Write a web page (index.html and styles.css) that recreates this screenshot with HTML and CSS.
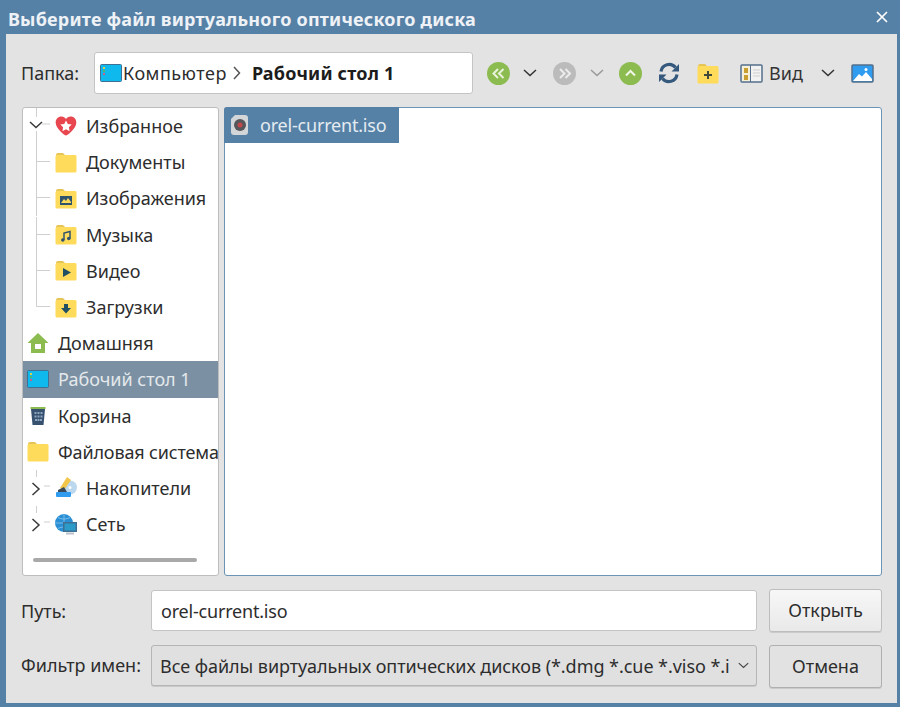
FILE: index.html
```html
<!DOCTYPE html>
<html lang="en">
<head>
    <meta charset="utf-8">
    <title>Выберите файл виртуального оптического диска</title>
    <link rel="stylesheet" href="styles.css">
</head>
<body>
    <svg class="defs" width="0" height="0">
        <symbol id="folder" viewBox="0 0 22 21">
            <path d="M1 4V3a2 2 0 0 1 2-2h5l2 2h4v3H1z" fill="#e6c557"/>
            <rect x="0.5" y="3" width="21" height="17.5" rx="1.5" fill="#ffdb5c"/>
        </symbol>
        <symbol id="desktop" viewBox="0 0 22 18">
            <rect x="0.5" y="0.5" width="21" height="17" rx="1" fill="#0fb9ee" stroke="#3f6f92"/>
            <rect x="3" y="3" width="2" height="2" fill="#d8d34c"/>
            <rect x="3" y="6" width="2" height="2" fill="#56b36b"/>
            <rect x="3" y="9" width="2" height="2" fill="#c45f8f"/>
        </symbol>
        <symbol id="chev-down" viewBox="0 0 14 8">
            <path d="M1 1l6 5.5L13 1" fill="none" stroke="currentColor" stroke-width="1.5"/>
        </symbol>
        <symbol id="chev-right" viewBox="0 0 8 14">
            <path d="M1 1l5.5 6L1 13" fill="none" stroke="currentColor" stroke-width="1.5"/>
        </symbol>
    </svg>

    <div class="window">
        <header class="titlebar">
            <span class="title">Выберите файл виртуального оптического диска</span>
            <svg class="close" width="12" height="12" viewBox="0 0 12 12"><path d="M1 1l10 10M11 1L1 11" stroke="#fff" stroke-width="1.7"/></svg>
        </header>

        <div class="content">
            <div class="toolbar">
                <span class="folder-label">Папка:</span>
                <div class="crumbs">
                    <svg class="crumb-icon" width="22" height="18"><use href="#desktop"/></svg>
                    <span class="crumb-root">Компьютер</span>
                    <svg class="crumb-sep" width="8" height="14"><use href="#chev-right"/></svg>
                    <b>Рабочий стол 1</b>
                </div>
                <div class="tools">
                    <svg class="tool t-back" width="23" height="23" viewBox="0 0 23 23"><circle cx="11.5" cy="11.5" r="11.5" fill="#8cbb4f"/><path d="M11 7l-4.500 4.500L11 16M16.500 7L12 11.500l4.500 4.500" fill="none" stroke="#e9f2dc" stroke-width="2"/></svg>
                    <svg class="tool t-arrow" width="14" height="8"><use href="#chev-down"/></svg>
                    <svg class="tool t-forward" width="23" height="23" viewBox="0 0 23 23"><circle cx="11.500" cy="11.500" r="11.500" fill="#bbbbbb"/><path d="M7 7l4.500 4.500L7 16M12.500 7l4.500 4.500-4.500 4.500" fill="none" stroke="#ececec" stroke-width="2"/></svg>
                    <svg class="tool t-arrow off" width="14" height="8"><use href="#chev-down"/></svg>
                    <svg class="tool t-up" width="23" height="23" viewBox="0 0 23 23"><circle cx="11.500" cy="11.500" r="11.500" fill="#8cbb4f"/><path d="M7 13.500l4.500-4.500 4.500 4.500" fill="none" stroke="#f1f6e8" stroke-width="2"/></svg>
                    <svg class="tool t-reload" width="22" height="22" viewBox="0 0 22 22"><path d="M3 9.500a8.200 8.200 0 0 1 14.500-4M19 12.500a8.200 8.200 0 0 1-14.500 4" fill="none" stroke="#35597c" stroke-width="3.200"/><path d="M21 2v7.500h-7.500zM1 20v-7.500h7.500z" fill="#35597c"/></svg>
                    <svg class="tool t-new" width="22" height="21" viewBox="0 0 22 21"><use href="#folder"/><path d="M11 8v8M7 12h8" stroke="#3f4a3a" stroke-width="2"/></svg>
                    <svg class="tool t-view" width="23" height="19" viewBox="0 0 23 19"><rect x="1" y="1" width="21" height="17" rx="1" fill="#f2f2f2" stroke="#54708c" stroke-width="1.500"/><rect x="2" y="2" width="8" height="15" fill="#f6f0d8"/><path d="M10.500 1v17" stroke="#54708c"/><rect x="4" y="4" width="4" height="5" fill="#c99f2f"/><rect x="4" y="11" width="4" height="5" fill="#c99f2f"/><path d="M13 6h7M13 9h7M13 12h7" stroke="#cfcfcf"/></svg>
                    <span class="view-text">Вид</span>
                    <svg class="tool t-arrow view-arrow" width="14" height="8"><use href="#chev-down"/></svg>
                    <svg class="tool t-preview" width="23" height="19" viewBox="0 0 23 19"><rect x="1" y="1" width="21" height="17" rx="1" fill="#2f9cf0" stroke="#54708c" stroke-width="1.500"/><path d="M2 17l6-7 3 2.500 4-4.500 6 7v2z" fill="#fff"/><circle cx="15" cy="5.500" r="1.500" fill="#fff"/></svg>
                </div>
            </div>

            <div class="main">
                <nav class="side">
                    <div class="side-list">
                        <div class="row">
                            <svg class="guide" width="28" height="36" viewBox="0 0 28 36"><path d="M13.500 0v9M13.500 23v13M19 16h8" stroke="#cfcfcf"/><path d="M7 14l6 5.500 6-5.500" fill="none" stroke="#3a3a3a" stroke-width="1.500"/></svg>
                            <svg class="ico" width="22" height="20" viewBox="0 0 22 20"><path d="M11 19.500C10 19.500 1 13 .7 7 .5 3 3 .5 6.500.5 8.500.5 10 1.500 11 3 12 1.500 13.500.5 15.500.5 19 .5 21.500 3 21.300 7 21 13 12 19.500 11 19.500z" fill="#e8474f"/><path d="M11 4.500l1.800 3.600 3.900.5-2.800 2.700.7 3.900-3.600-1.900-3.600 1.900.7-3.900-2.800-2.700 3.900-.5z" fill="#fff"/></svg>
                            <span>Избранное</span>
                        </div>
                        <div class="row">
                            <svg class="guide" width="28" height="36" viewBox="0 0 28 36"><path d="M13.500 0v36M14 17.500h13" stroke="#cfcfcf"/></svg>
                            <svg class="ico" width="22" height="21"><use href="#folder"/></svg>
                            <span>Документы</span>
                        </div>
                        <div class="row">
                            <svg class="guide" width="28" height="36" viewBox="0 0 28 36"><path d="M13.500 0v36M14 17.500h13" stroke="#cfcfcf"/></svg>
                            <svg class="ico" width="22" height="21" viewBox="0 0 22 21"><use href="#folder"/><rect x="5" y="8" width="12" height="9" fill="#30536e"/><path d="M6 15l3-4 2 2 2-3 3 4v1H6z" fill="#ffdb5c"/></svg>
                            <span>Изображения</span>
                        </div>
                        <div class="row">
                            <svg class="guide" width="28" height="36" viewBox="0 0 28 36"><path d="M13.500 0v36M14 17.500h13" stroke="#cfcfcf"/></svg>
                            <svg class="ico" width="22" height="21" viewBox="0 0 22 21"><use href="#folder"/><path d="M9 16V9l6-1.500V14.500" fill="none" stroke="#30536e" stroke-width="1.500"/><circle cx="7.800" cy="16" r="1.800" fill="#30536e"/><circle cx="13.800" cy="14.500" r="1.800" fill="#30536e"/></svg>
                            <span>Музыка</span>
                        </div>
                        <div class="row">
                            <svg class="guide" width="28" height="36" viewBox="0 0 28 36"><path d="M13.500 0v36M14 17.500h13" stroke="#cfcfcf"/></svg>
                            <svg class="ico" width="22" height="21" viewBox="0 0 22 21"><use href="#folder"/><path d="M8 8l8 4.500-8 4.500z" fill="#1f4f63"/></svg>
                            <span>Видео</span>
                        </div>
                        <div class="row">
                            <svg class="guide" width="28" height="36" viewBox="0 0 28 36"><path d="M13.500 0v17.500H27" fill="none" stroke="#cfcfcf"/></svg>
                            <svg class="ico" width="22" height="21" viewBox="0 0 22 21"><use href="#folder"/><path d="M9 7h4v4h3l-5 5.500L6 11h3z" fill="#1f4f63"/></svg>
                            <span>Загрузки</span>
                        </div>
                        <div class="row top">
                            <svg class="ico" width="22" height="20" viewBox="0 0 22 20"><path d="M11 0L0.500 10H4v10h14V10h3.500z" fill="#8cbb4f"/><rect x="8" y="11" width="6" height="5" fill="#fff"/></svg>
                            <span>Домашняя</span>
                        </div>
                        <div class="row top selected">
                            <svg class="ico" width="22" height="18"><use href="#desktop"/></svg>
                            <span>Рабочий стол 1</span>
                        </div>
                        <div class="row top">
                            <svg class="ico trash" width="16" height="18" viewBox="0 0 16 18"><path d="M1 2h14l-1.500 16h-11z" fill="#36506f"/><rect x="0.500" y="0" width="15" height="2" fill="#8cbb4f"/><path d="M4.500 5h2v2h-2zM7.500 5h2v2h-2zM10.500 5h2v2h-2zM4.500 8.500h2v2h-2zM7.500 8.500h2v2h-2zM10.500 8.500h2v2h-2zM5 12h2v2H5zM7.500 12h2v2h-2zM10 12h2v2h-2z" fill="#8fa5bd"/></svg>
                            <span>Корзина</span>
                        </div>
                        <div class="row top">
                            <svg class="ico" width="22" height="21"><use href="#folder"/></svg>
                            <span class="fs-name">Файловая система</span>
                        </div>
                        <div class="row">
                            <svg class="guide" width="28" height="36" viewBox="0 0 28 36"><path d="M13.500 0v7M21 16h6" stroke="#cfcfcf"/><path d="M9.500 13l6.500 6-6.500 6" fill="none" stroke="#3a3a3a" stroke-width="1.500"/></svg>
                            <svg class="ico" width="22" height="21" viewBox="0 0 22 21"><circle cx="15" cy="10.500" r="7" fill="#bcd8ee"/><circle cx="15" cy="10.500" r="1.500" fill="#fff"/><path d="M12 0l4 3-7 10-4-2z" fill="#f1c64a"/><path d="M3 13l6-3 3 5H3z" fill="#3a4a5a"/><rect x="1" y="15" width="15" height="5" rx="1" fill="#2f9cf0"/></svg>
                            <span>Накопители</span>
                        </div>
                        <div class="row">
                            <svg class="guide" width="28" height="36" viewBox="0 0 28 36"><path d="M13.500 0v7M21 16h6" stroke="#cfcfcf"/><path d="M9.500 13l6.500 6-6.500 6" fill="none" stroke="#3a3a3a" stroke-width="1.500"/></svg>
                            <svg class="ico" width="22" height="21" viewBox="0 0 22 21"><circle cx="9" cy="9" r="9" fill="#2b8fd6"/><path d="M0 9h18M9 0v18M3 3.500c4 2 8 2 12 0M3 14.500c4-2 8-2 12 0" fill="none" stroke="#8cc6ee" stroke-width="0.800"/><rect x="8" y="8" width="14" height="10" fill="#3f6f92"/><rect x="9.500" y="9.500" width="11" height="7" fill="#2b9cc9"/><rect x="11" y="18.500" width="8" height="2" fill="#b9c2ca"/></svg>
                            <span>Сеть</span>
                        </div>
                    </div>
                    <div class="side-scroll"></div>
                </nav>

                <section class="files">
                    <div class="file selected">
                        <svg class="file-ico" width="18" height="20" viewBox="0 0 18 20"><path d="M4 0h10a3 3 0 0 1 3 3v14a3 3 0 0 1-3 3H3a3 3 0 0 1-3-3V4z" fill="#d3d6d8"/><circle cx="9" cy="10" r="6" fill="#55565a"/><circle cx="9" cy="10" r="2.500" fill="#c0474a"/></svg>
                        <span class="latin">orel-current.iso</span>
                    </div>
                </section>
            </div>

            <div class="form-row path-row">
                <label class="form-label">Путь:</label>
                <div class="field"><span class="latin">orel-current.iso</span></div>
                <button class="btn btn-open" type="button">Открыть</button>
            </div>
            <div class="form-row filter-row">
                <label class="form-label">Фильтр имен:</label>
                <div class="field select">
                    <span class="select-text">Все файлы виртуальных оптических дисков (*.dmg *.cue *.viso *.iso)</span>
                    <svg class="select-arrow" width="11" height="7"><use href="#chev-down"/></svg>
                </div>
                <button class="btn btn-cancel" type="button">Отмена</button>
            </div>
        </div>
    </div>
</body>
</html>
```

FILE: styles.css
```css
html, body {
    margin: 0;
    padding: 0;
    height: 100%;
    overflow: hidden;
}

body {
    font-family: "Noto Sans", sans-serif;
    font-size: 18px;
    color: #2d2d2d;
    background-color: #5681a6;
}

svg {
    display: block;
    flex: none;
}

.defs {
    position: absolute;
}

.latin {
    letter-spacing: -0.2px;
}

.window {
    display: flex;
    flex-direction: column;
    height: 707px;
    padding: 0 3px 4px 6px;
    box-sizing: border-box;
}

.titlebar {
    display: flex;
    align-items: center;
    justify-content: space-between;
    height: 34px;
    flex: none;
    margin-left: 2px;
    padding-right: 9px;
    box-sizing: border-box;
    color: #eef2f6;
}

.title {
    font-weight: bold;
    letter-spacing: 0.2px;
    padding-top: 4px;
    white-space: nowrap;
}

.content {
    flex: 1;
    display: flex;
    flex-direction: column;
    background-color: #e3e3e3;
    padding: 17px 15px 15px 15px;
    box-sizing: border-box;
}

.toolbar {
    display: flex;
    align-items: center;
    height: 42px;
    flex: none;
    margin-top: 1px;
}

.folder-label {
    width: 73px;
    flex: none;
}

.crumbs {
    display: flex;
    align-items: center;
    width: 379px;
    height: 42px;
    flex: none;
    box-sizing: border-box;
    padding-left: 5px;
    background-color: #fff;
    border: 1px solid #c4c4c4;
    border-radius: 3px;
}

.crumb-icon {
    margin-right: 1px;
}

.crumb-root {
    letter-spacing: 0.5px;
}

.crumb-sep {
    margin: 0 11px 0 6px;
    color: #555;
}

.crumbs b {
    color: #1c1c1c;
    letter-spacing: 0.2px;
}

.tools {
    display: flex;
    align-items: center;
    margin-left: 14px;
    color: #333;
}

.t-back {
    margin-right: 13px;
}

.t-arrow {
    color: #333;
}

.t-arrow.off {
    color: #999;
    margin-left: 14px;
}

.t-forward {
    margin-left: 16px;
}

.t-up {
    margin-left: 15px;
}

.t-reload {
    margin-left: 16px;
}

.t-new {
    margin-left: 17px;
}

.t-view {
    margin-left: 21px;
}

.view-text {
    margin-left: 6px;
}

.view-arrow {
    margin-left: 18px;
}

.t-preview {
    margin-left: 16px;
}

.main {
    flex: 1;
    display: flex;
    gap: 5px;
    min-height: 0;
    margin-top: 13px;
    margin-left: 1px;
}

.side {
    width: 197px;
    flex: none;
    display: flex;
    flex-direction: column;
    justify-content: space-between;
    box-sizing: border-box;
    padding-bottom: 13px;
    background-color: #fff;
    border: 1px solid #bdbdbd;
    border-radius: 3px;
    overflow: hidden;
}

.row {
    display: flex;
    align-items: center;
    height: 36.2px;
    white-space: nowrap;
    overflow: hidden;
}

.guide {
    margin-right: 4px;
}

.row .ico {
    margin-right: 9px;
}

.row.top {
    padding-left: 4px;
}

.row.top .trash {
    margin: 0 12px 0 3px;
}

.row.selected {
    background-color: #7b91a3;
    color: #e4e8eb;
}

.fs-name {
    letter-spacing: -0.15px;
}

.side-scroll {
    height: 4px;
    margin: 0 21px 0 10px;
    background-color: #a9a9a9;
    border-radius: 2px;
}

.files {
    flex: 1;
    box-sizing: border-box;
    background-color: #fff;
    border: 1px solid #6b93b5;
    border-radius: 3px;
}

.file {
    display: flex;
    align-items: center;
    width: 175px;
    height: 36px;
    box-sizing: border-box;
    margin: -1px 0 0 -1px;
    padding-left: 7px;
}

.file.selected {
    background-color: #5681a6;
    border-radius: 3px 0 0 0;
    color: #e4ebf1;
}

.file-ico {
    margin-right: 11px;
}

.form-row {
    display: flex;
    align-items: center;
    flex: none;
}

.path-row {
    margin-top: 13px;
}

.filter-row {
    margin-top: 13px;
    align-items: flex-start;
}

.form-label {
    width: 130px;
    flex: none;
}

.filter-row .form-label {
    line-height: 41px;
}

.field {
    width: 606px;
    height: 41px;
    flex: none;
    display: flex;
    align-items: center;
    box-sizing: border-box;
    padding-left: 9px;
    background-color: #fff;
    border: 1px solid #c4c4c4;
    border-radius: 3px;
}

.select {
    background-color: #e0e0e0;
    border-color: #b5b5b5;
    padding-left: 8px;
    padding-right: 7px;
    box-shadow: 0 1px 0 #c9c9c9;
}

.select-text {
    flex: 1;
    white-space: nowrap;
    overflow: hidden;
    letter-spacing: -0.05px;
}

.select-arrow {
    margin-left: 9px;
    color: #444;
}

.btn {
    width: 113px;
    height: 43px;
    flex: none;
    margin-left: 12px;
    padding: 0 0 2px;
    font: inherit;
    color: inherit;
    border: 1px solid #bdbdbd;
    border-radius: 3px;
    box-shadow: 0 1px 0 #cacaca;
}

.btn-open {
    background: linear-gradient(#f7f7f7, #e9e9e9);
}

.btn-cancel {
    background-color: #e2e2e2;
    border-color: #b0b0b0;
}
```
